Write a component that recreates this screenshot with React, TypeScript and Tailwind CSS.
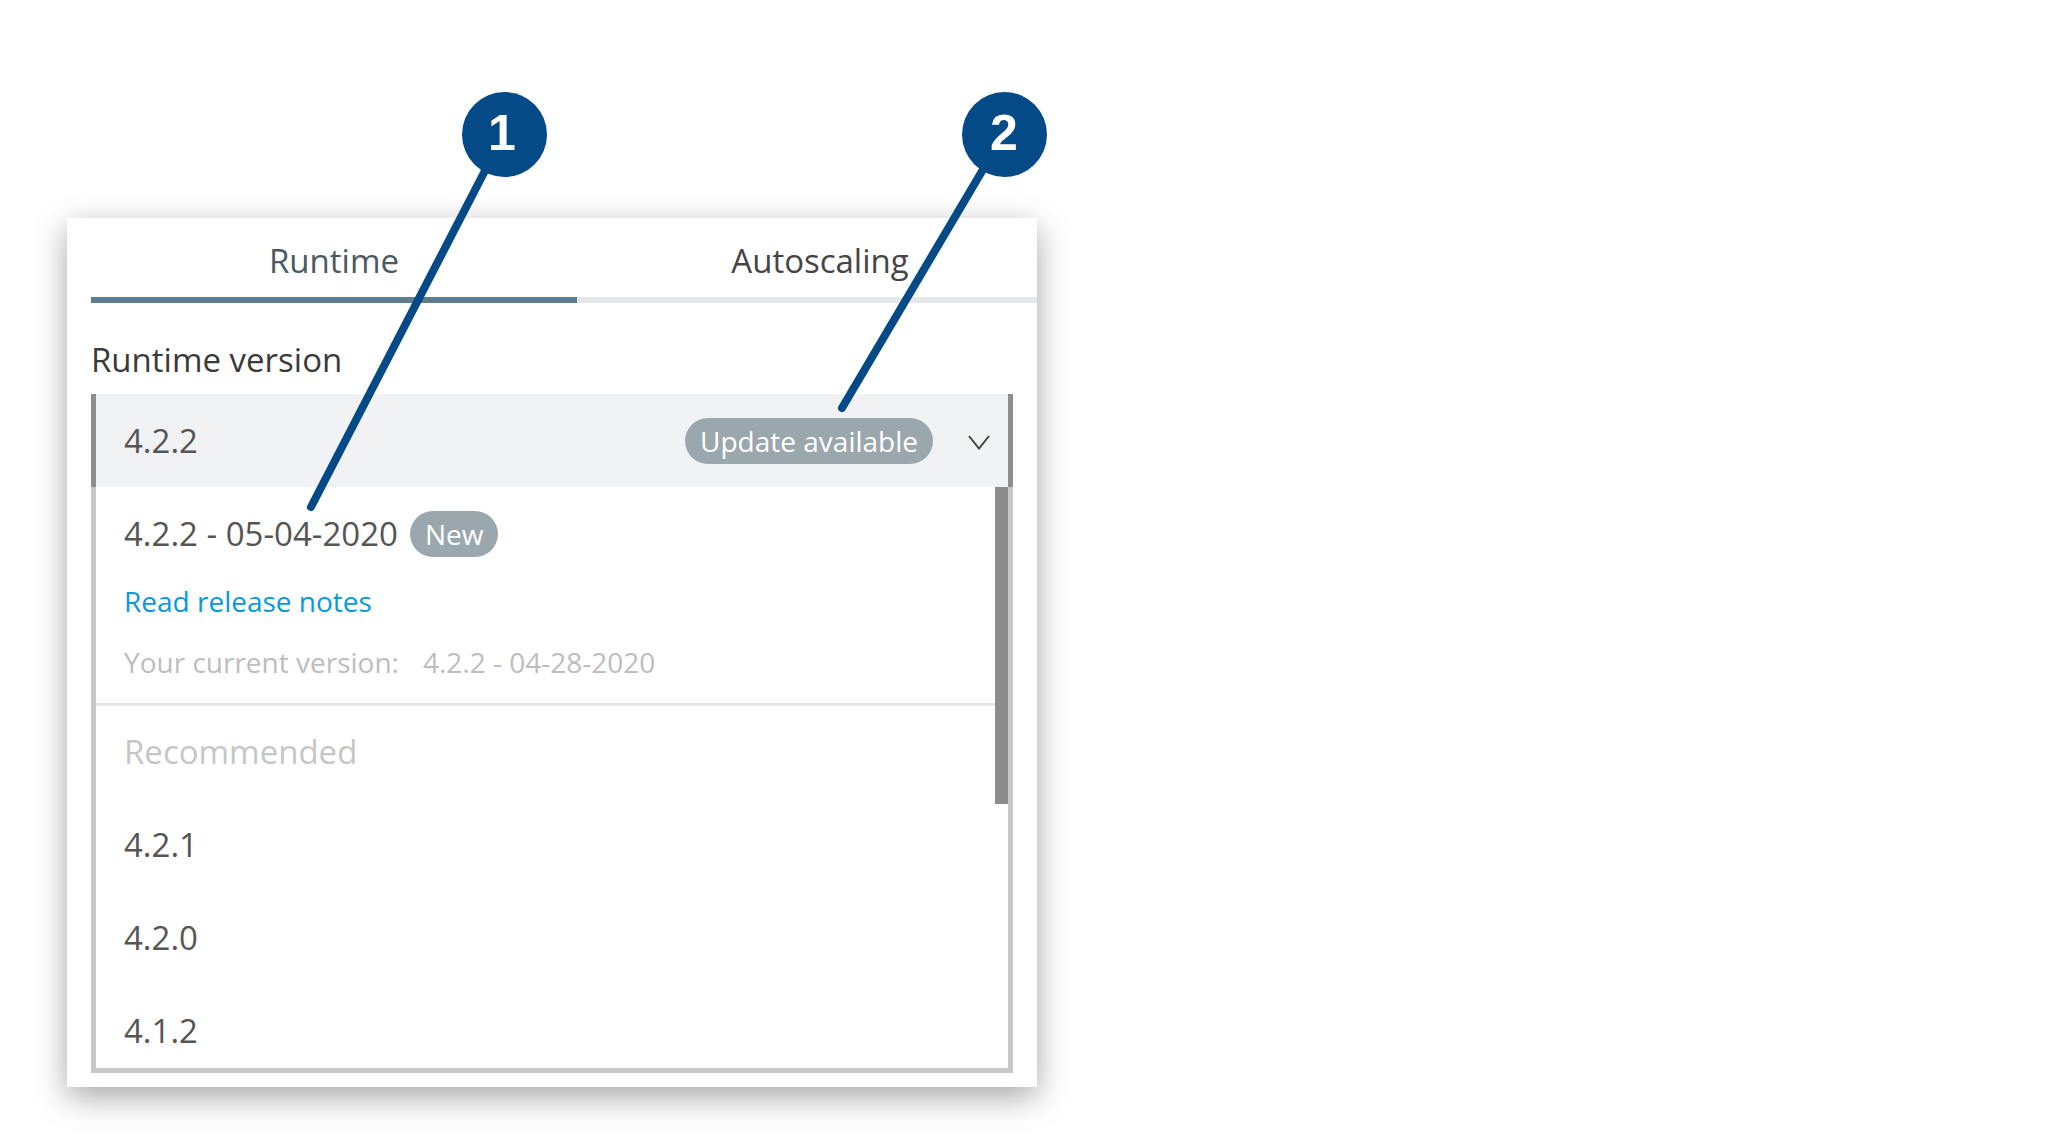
import React from 'react'

const versions = ['4.2.1', '4.2.0', '4.1.2']

function Chevron() {
  return (
    <svg width="22" height="15" viewBox="0 0 22 15" fill="none">
      <polyline points="1,1 11,13.5 21,1" stroke="#444" strokeWidth="2" />
    </svg>
  )
}

function Callouts() {
  return (
    <svg className="absolute inset-0 pointer-events-none" width="2048" height="1138" viewBox="0 0 2048 1138">
      <line x1="504" y1="134" x2="311" y2="507" stroke="#044a86" strokeWidth="8" strokeLinecap="round" />
      <line x1="1004" y1="134" x2="842" y2="408" stroke="#044a86" strokeWidth="8" strokeLinecap="round" />
      <circle cx="504.5" cy="134.5" r="42.5" fill="#044a86" />
      <circle cx="1004.5" cy="134.5" r="42.5" fill="#044a86" />
      <text x="502" y="133" fill="#fff" fontFamily="'Liberation Sans', Arial, sans-serif" fontWeight="700" fontSize="50" textAnchor="middle" dominantBaseline="central">1</text>
      <text x="1004" y="133" fill="#fff" fontFamily="'Liberation Sans', Arial, sans-serif" fontWeight="700" fontSize="50" textAnchor="middle" dominantBaseline="central">2</text>
    </svg>
  )
}

export default function App() {
  return (
    <div className="relative w-[2048px] h-[1138px] bg-white overflow-hidden font-['Open_Sans',sans-serif]">
      <div className="pt-[218px] pl-[67px]">
        <div className="w-[970px] h-[869px] bg-white overflow-hidden shadow-[0_10px_30px_rgba(0,0,0,0.35)] pt-[21px] pl-[24px]">
          {/* tabs */}
          <div className="flex w-[972px]">
            <div className="w-[486px] pb-[14px] border-b-[6px] border-[#5f7d8e] text-center text-[33px] leading-[44px] text-[#4a5964]">
              Runtime
            </div>
            <div className="w-[486px] pb-[14px] border-b-[6px] border-[#e6e7e8] text-center text-[33px] leading-[44px] text-[#454545]">
              Autoscaling
            </div>
          </div>

          <div className="mt-[37px] text-[33px] leading-[40px] text-[#3a3a3a]">Runtime version</div>

          {/* select header */}
          <div className="mt-[14px] w-[922px] h-[93px] bg-[#f1f2f4] border-x-[5px] border-[#8e8e8e] flex items-center pl-[28px] pr-[18px]">
            <span className="text-[33px] text-[#555]">4.2.2</span>
            <span className="ml-auto h-[46px] px-[15px] rounded-full bg-[#9aa8ae] text-white text-[28px] font-medium flex items-center">
              Update available
            </span>
            <span className="ml-[35px] flex items-center pt-[4px]">
              <Chevron />
            </span>
          </div>

          {/* options list */}
          <div className="w-[922px] h-[586px] border-x-[5px] border-b-[5px] border-[#c6c7c9] flex overflow-hidden">
            <div className="flex-1">
              <div className="pl-[28px] pt-[24px]">
                <div className="h-[46px] flex items-center gap-[12px]">
                  <span className="text-[33px] text-[#555]">4.2.2 - 05-04-2020</span>
                  <span className="h-[46px] px-[15px] rounded-full bg-[#9aa8ae] text-white text-[28px] font-medium flex items-center">
                    New
                  </span>
                </div>
                <div className="mt-[24px] text-[28px] leading-[40px] text-[#0898dc]">Read release notes</div>
                <div className="mt-[23px] text-[28px] leading-[36px] text-[#bdbdbd]">
                  Your current version:<span className="ml-[24px]">4.2.2 - 04-28-2020</span>
                </div>
              </div>
              <div className="mt-[23px] h-[3px] bg-[#e5e5e5]" />
              <div className="h-[92px] flex items-center pl-[28px] text-[33px] text-[#c6c6c6]">Recommended</div>
              {versions.map((v) => (
                <div key={v} className="h-[93px] flex items-center pl-[28px] text-[33px] text-[#555]">
                  {v}
                </div>
              ))}
            </div>
            <div className="w-[13px] h-[317px] bg-[#8c8c8c] shrink-0" />
          </div>
        </div>
      </div>
      <Callouts />
    </div>
  )
}
